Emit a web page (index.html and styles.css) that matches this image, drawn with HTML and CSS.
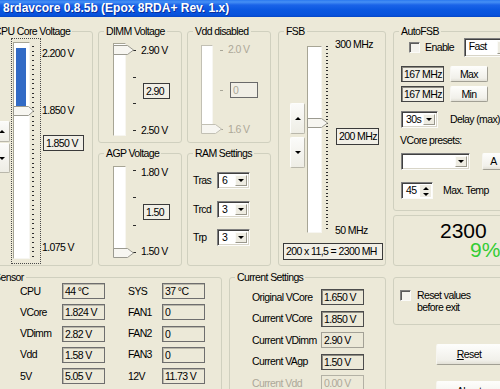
FILE: index.html
```html
<!DOCTYPE html>
<html>
<head>
<meta charset="utf-8">
<title>8rdavcore</title>
<link rel="stylesheet" href="styles.css">
</head>
<body>
<div class="titlebar">8rdavcore 0.8.5b (Epox 8RDA+ Rev. 1.x)</div>
<div class="client">
  <div class="toprow">
    <fieldset class="gb cpu">
      <legend>CPU Core Voltage</legend>
      <div class="cpu-body">
        <div class="spin cpu-spin"><div class="sb up"></div><div class="sb down"></div></div>
        <div class="focus">
          <div class="channel ch-cpu">
            <div class="sel"></div>
            <svg class="thumb th-cpu" width="21" height="10" viewBox="0 0 21 10"><polygon points="0.5,0.5 15.5,0.5 20.5,5 15.5,9.5 0.5,9.5"/></svg>
          </div>
          <div class="dots dots-cpu"></div>
        </div>
        <div class="scale cpu-scale">
          <span class="c-l1">2.200 V</span>
          <span class="c-l2">1.850 V</span>
          <span class="ed e-cpu">1.850 V</span>
          <span class="c-l3">1.075 V</span>
        </div>
      </div>
    </fieldset>

    <div class="col col2">
      <fieldset class="gb dimm">
        <legend>DIMM Voltage</legend>
        <div class="vs vs-dimm">
          <div class="channel ch-s">
            <svg class="thumb th-dimm" width="21" height="10" viewBox="0 0 21 10"><polygon points="0.5,0.5 14.5,0.5 20.5,5 14.5,9.5 0.5,9.5"/></svg>
          </div>
          <div class="ticks"><i></i><i></i><i></i><i></i></div>
          <div class="scale vscale">
            <span>2.90 V</span>
            <span class="ed e-v">2.90</span>
            <span>2.50 V</span>
          </div>
        </div>
      </fieldset>
      <fieldset class="gb agp">
        <legend>AGP Voltage</legend>
        <div class="vs vs-agp">
          <div class="channel ch-s">
            <svg class="thumb th-agp" width="21" height="10" viewBox="0 0 21 10"><polygon points="0.5,0.5 14.5,0.5 20.5,5 14.5,9.5 0.5,9.5"/></svg>
          </div>
          <div class="ticks"><i></i><i></i><i></i><i></i></div>
          <div class="scale vscale">
            <span>1.80 V</span>
            <span class="ed e-v">1.50</span>
            <span>1.50 V</span>
          </div>
        </div>
      </fieldset>
    </div>

    <div class="col col3">
      <fieldset class="gb vdd">
        <legend>Vdd disabled</legend>
        <div class="vs vs-vdd">
          <div class="channel ch-s">
            <svg class="thumb th-vdd" width="21" height="10" viewBox="0 0 21 10"><polygon points="0.5,0.5 14.5,0.5 20.5,5 14.5,9.5 0.5,9.5"/></svg>
          </div>
          <div class="ticks ticks-dis"><i></i><i></i><i></i></div>
          <div class="scale vscale dis">
            <span>2.0 V</span>
            <span class="ed e-v e-dis">0</span>
            <span>1.6 V</span>
          </div>
        </div>
      </fieldset>
      <fieldset class="gb ram">
        <legend>RAM Settings</legend>
        <div class="ramgrid">
          <span>Tras</span><div class="combo c-ram"><span class="cv">6</span><b class="dd"></b></div>
          <span>Trcd</span><div class="combo c-ram"><span class="cv">3</span><b class="dd"></b></div>
          <span>Trp</span><div class="combo c-ram"><span class="cv">3</span><b class="dd"></b></div>
        </div>
      </fieldset>
    </div>

    <fieldset class="gb fsb">
      <legend>FSB</legend>
      <div class="fsb-row">
        <div class="spin fsb-spin"><div class="sb up"></div><div class="sb down"></div></div>
        <div class="channel ch-fsb">
          <svg class="thumb th-fsb" width="21" height="10" viewBox="0 0 21 10"><polygon points="0.5,0.5 14.5,0.5 20.5,5 14.5,9.5 0.5,9.5"/></svg>
        </div>
        <div class="dots dots-fsb"></div>
        <div class="scale fsb-scale">
          <span>300 MHz</span>
          <span class="ed e-fsb">200 MHz</span>
          <span class="f-l3">50 MHz</span>
        </div>
      </div>
      <div class="ed e-res">200 x 11,5 = 2300 MH</div>
    </fieldset>

    <div class="col col5">
      <fieldset class="gb autofsb">
        <legend>AutoFSB</legend>
        <div class="af-row r1"><span class="chk"></span><span class="af-en">Enable</span><div class="combo c-fast"><span class="cv">Fast</span><b class="dd"></b></div></div>
        <div class="af-row r2"><span class="ed e-mhz">167 MHz</span><span class="btn b-mm">Max</span></div>
        <div class="af-row r3"><span class="ed e-mhz">167 MHz</span><span class="btn b-mm">Min</span></div>
        <div class="af-row r4"><div class="combo c-30"><span class="cv">30s</span><b class="dd"></b></div><span class="af-delay">Delay (max)</span></div>
        <div class="af-lbl">VCore presets:</div>
        <div class="af-row r5"><div class="combo c-pre"><span class="cv"></span><b class="dd"></b></div><span class="btn b-a">A</span></div>
        <div class="af-row r6"><div class="spinedit"><span class="cv">45</span><span class="ud"><i class="u"></i><i class="d"></i></span></div><span class="af-mt">Max. Temp</span></div>
      </fieldset>
      <div class="panel counter">
        <div class="big n1">2300</div>
        <div class="big n2">9%</div>
      </div>
    </div>
  </div>

  <div class="botrow">
    <fieldset class="gb sensor">
      <legend>Sensor</legend>
      <div class="sgrid">
        <span>CPU</span><span class="sv">44 °C</span><span>SYS</span><span class="sv">37 °C</span>
        <span>VCore</span><span class="sv">1.824 V</span><span>FAN1</span><span class="sv">0</span>
        <span>VDimm</span><span class="sv">2.82 V</span><span>FAN2</span><span class="sv">0</span>
        <span>Vdd</span><span class="sv">1.58 V</span><span>FAN3</span><span class="sv">0</span>
        <span>5V</span><span class="sv">5.05 V</span><span>12V</span><span class="sv">11.73 V</span>
      </div>
    </fieldset>
    <fieldset class="gb current">
      <legend>Current Settings</legend>
      <div class="cgrid">
        <span>Original VCore</span><span class="sv dark">1.650 V</span>
        <span>Current VCore</span><span class="sv dark">1.850 V</span>
        <span>Current VDimm</span><span class="sv light">2.90 V</span>
        <span>Current VAgp</span><span class="sv dark">1.50 V</span>
        <span class="dis">Current Vdd</span><span class="sv dis-box">0.00 V</span>
      </div>
    </fieldset>
    <div class="col col-r">
      <div class="panel resetp">
        <span class="chk"></span>
        <span class="rtxt">Reset values<br>before exit</span>
      </div>
      <span class="btn b-big b-reset"><u>R</u>eset</span>
      <span class="btn b-big b-about">About</span>
    </div>
  </div>
</div>
</body>
</html>
```

FILE: styles.css
```css
* { box-sizing: border-box; }
html, body { margin: 0; padding: 0; }
body {
  width: 500px;
  height: 389px;
  overflow: hidden;
  background: #ece9d8;
  font-family: "Liberation Sans", Arial, sans-serif;
  font-size: 10.5px;
  line-height: 13px;
  letter-spacing: -0.6px;
  color: #000;
}

.titlebar {
  height: 17px;
  padding-left: 3px;
  font: bold 12px/17px "Liberation Sans", Arial, sans-serif;
  letter-spacing: 0;
  color: #fff;
  white-space: nowrap;
  text-shadow: 1px 1px 0 #0b2f9c;
  background: linear-gradient(to bottom, #2a78ef 0px, #4690f5 2px, #1a63e8 5px, #0a57e0 10px, #0752dc 15px, #0546c6 17px);
}

.client { width: 540px; margin-left: -14px; padding-top: 8px; }

.toprow { display: flex; align-items: flex-start; height: 241px; }
.botrow { display: flex; align-items: flex-start; margin-top: 5px; }
.col { display: flex; flex-direction: column; }

.gb {
  margin: 0;
  padding: 0;
  min-width: 0;
  border: 1px solid #d0d0bf;
  border-radius: 3px;
}
.gb > legend { margin-left: 5px; padding: 0 2px; line-height: 13px; white-space: nowrap; }

.panel { border: 1px solid #d0d0bf; border-radius: 3px; }

/* columns */
.cpu { width: 107px; height: 241px; }
.col2 { width: 84px; margin-left: 5px; }
.col3 { width: 84px; margin-left: 5px; }
.dimm, .vdd { height: 118px; }
.agp, .ram { height: 119px; margin-top: 4px; }
.fsb { width: 108px; height: 241px; margin-left: 7px; }
.col5 { width: 120px; margin-left: 7px; }
.autofsb { height: 186px; }
.counter { height: 51px; margin-top: 4px; padding-top: 5px; }

/* generic parts */
.ed {
  display: block;
  height: 16px;
  border: 1px solid #3a3a3a;
  background: #f1efe6;
  padding-left: 2px;
  line-height: 14px;
  white-space: nowrap;
  overflow: hidden;
}
.channel {
  position: relative;
  background: #fff;
  border: 1px solid;
  border-color: #a7a595 #f7f6f1 #f7f6f1 #a7a595;
}
.thumb { position: absolute; left: -1px; display: block; }
.thumb polygon { fill: #f7f6f1; stroke: #9b9a90; stroke-width: 1; }
.th-vdd polygon { stroke: #c2c0b4; }

.dots { width: 2px; }
.dots-cpu {
  margin: 7px 0 0 2px;
  height: 211px;
  background: repeating-linear-gradient(to bottom, #2c2c2c 0, #2c2c2c 1px, transparent 1px, transparent 4.67px);
}
.dots-fsb {
  margin: 8px 0 0 4px;
  height: 185px;
  background: repeating-linear-gradient(to bottom, #2c2c2c 0, #2c2c2c 1px, transparent 1px, transparent 3.5px);
}

.spin { display: flex; flex-direction: column; }
.sb {
  display: flex;
  align-items: center;
  justify-content: center;
  background: linear-gradient(to bottom, #fbfbf9, #eeede5);
  border: 1px solid;
  border-color: #fdfdfb #b9b7ab #b9b7ab #fdfdfb;
  border-radius: 2px;
}
.sb.up::after { content: ""; border-left: 3px solid transparent; border-right: 3px solid transparent; border-bottom: 3px solid #000; }
.sb.down::after { content: ""; border-left: 3px solid transparent; border-right: 3px solid transparent; border-top: 3px solid #000; }

/* CPU */
.cpu-body { display: flex; align-items: flex-start; }
.cpu-spin { width: 17px; margin: 83px 0 0 6px; }
.cpu-spin .up { height: 21px; }
.cpu-spin .down { height: 30px; margin-top: 1px; }
.focus {
  display: flex;
  align-items: flex-start;
  width: 30px;
  height: 226px;
  margin-left: 1px;
  border: 1px dotted #4a4a4a;
}
.ch-cpu { width: 17px; height: 217px; margin: 3px 0 0 1px; }
.sel { position: absolute; left: 2px; top: 5px; width: 10px; height: 59px; background: #316ac5; }
.th-cpu { top: 63px; }
.scale { display: flex; flex-direction: column; white-space: nowrap; }
.cpu-scale { margin-left: 1px; }
.c-l1 { margin-top: 9px; }
.c-l2 { margin-top: 44px; }
.e-cpu { margin: 18px 0 0 1px; width: 41px; }
.c-l3 { margin-top: 90px; }

/* small sliders */
.vs { display: flex; align-items: flex-start; }
.ch-s { width: 13px; }
.ticks { display: flex; flex-direction: column; justify-content: space-between; width: 3px; margin-left: 7px; }
.ticks i { display: block; width: 3px; height: 1px; background: #2c2c2c; }
.ticks-dis i { background: #a8a698; }
.vscale { justify-content: space-between; margin-left: 5px; }
.e-v { margin-left: 2px; width: 27px; }
.dis { color: #aca899; }
.e-dis { border-color: #6a6a6a; width: 28px; }

.vs-dimm { margin-left: 14px; }
.vs-dimm .ch-s { margin-top: 5px; height: 93px; }
.vs-dimm .ticks { margin-top: 12px; height: 81px; }
.vs-dimm .vscale { margin-top: 6px; height: 93px; }
.th-dimm { top: 1px; }

.vs-agp { margin-left: 14px; }
.vs-agp .ch-s { margin-top: 6px; height: 91px; }
.vs-agp .ticks { margin-top: 10px; height: 83px; }
.vs-agp .vscale { margin-top: 6px; height: 92px; }
.th-agp { top: 81px; }

.vs-vdd { margin-left: 13px; }
.vs-vdd .ch-s { width: 12px; margin-top: 7px; height: 88px; border-color: #c2c0b4 #f7f6f1 #f7f6f1 #c2c0b4; }
.vs-vdd .ticks { margin-top: 12px; height: 80px; }
.vs-vdd .vscale { margin-top: 5px; height: 93px; }
.th-vdd { top: 78px; }

/* RAM */
.ramgrid {
  display: grid;
  grid-template-columns: 24px 33px;
  grid-auto-rows: 17px;
  row-gap: 11.5px;
  align-items: center;
  margin: 12px 0 0 5px;
}
.combo {
  display: flex;
  align-items: stretch;
  height: 17px;
  background: #fff;
  border: 1px solid;
  border-color: #7f7f7f #fbfbf8 #fbfbf8 #7f7f7f;
  box-shadow: inset 1px 1px 0 #404040, inset -1px -1px 0 #d8d5c8;
  padding: 2px;
}
.cv { flex: 1; padding-left: 2px; line-height: 11px; white-space: nowrap; overflow: hidden; }
.dd {
  display: flex;
  align-items: center;
  justify-content: center;
  width: 12px;
  background: #eeece2;
  border: 1px solid;
  border-color: #fbfbf8 #9a988c #9a988c #fbfbf8;
}
.dd::after { content: ""; border-left: 3px solid transparent; border-right: 3px solid transparent; border-top: 3px solid #000; }

/* FSB */
.fsb-row { display: flex; align-items: flex-start; height: 205px; }
.fsb-spin { width: 15px; margin: 65px 0 0 11px; }
.fsb-spin .up { height: 31px; }
.fsb-spin .down { height: 31px; margin-top: 3px; }
.ch-fsb { width: 15px; height: 187px; margin: 8px 0 0 2px; }
.th-fsb { top: 71px; }
.fsb-scale { margin-left: 7px; }
.e-fsb { margin: 77px 0 0 1px; width: 43px; height: 17px; line-height: 15px; }
.f-l3 { margin-top: 79px; }
.e-res { margin-left: 4px; width: 100px; height: 17px; line-height: 15px; }

/* AutoFSB */
.af-row { display: flex; align-items: center; }
.r1 { height: 19px; }
.chk {
  display: block;
  flex: none;
  width: 11px;
  height: 11px;
  background: #f4f3ee;
  border: 1px solid;
  border-color: #7f7f7f #fbfbf8 #fbfbf8 #7f7f7f;
  box-shadow: inset 1px 1px 0 #5a5a5a;
}
.r1 .chk { margin-left: 15px; }
.af-en { margin-left: 5px; width: 42px; }
.c-fast { width: 52px; height: 19px; }
.r2 { margin-top: 9px; }
.r3 { margin-top: 4px; }
.e-mhz {
  margin-left: 7px;
  width: 43px;
  border-color: #454545;
  box-shadow: inset 1px 1px 0 #8c8a80;
}
.btn {
  display: flex;
  align-items: center;
  justify-content: center;
  background: linear-gradient(to bottom, #fdfdfb, #f1f0ea 80%, #e2e0d6);
  border: 1px solid;
  border-color: #fdfdfb #a19f94 #a19f94 #f6f5f0;
  border-radius: 2px;
  white-space: nowrap;
}
.b-mm { margin-left: 6px; width: 38px; height: 16px; }
.r4 { margin-top: 9px; }
.c-30 { margin-left: 7px; width: 37px; }
.af-delay { margin-left: 12px; white-space: nowrap; }
.af-lbl { margin: 6px 0 0 6px; white-space: nowrap; }
.r5 { margin-top: 6px; }
.c-pre { margin-left: 7px; width: 70px; }
.b-a { margin-left: 12px; width: 30px; height: 17px; justify-content: flex-start; padding-left: 7px; }
.r6 { margin-top: 12px; }
.spinedit {
  display: flex;
  margin-left: 7px;
  width: 32px;
  height: 17px;
  background: #fff;
  border: 1px solid;
  border-color: #7f7f7f #fbfbf8 #fbfbf8 #7f7f7f;
  box-shadow: inset 1px 1px 0 #404040;
  padding: 2px 1px 1px 2px;
}
.ud { display: flex; flex-direction: column; width: 11px; }
.ud i {
  flex: 1;
  display: flex;
  align-items: center;
  justify-content: center;
  background: #eeece2;
}
.ud .u::after { content: ""; border-left: 3px solid transparent; border-right: 3px solid transparent; border-bottom: 3px solid #000; }
.ud .d::after { content: ""; border-left: 3px solid transparent; border-right: 3px solid transparent; border-top: 3px solid #000; }
.af-mt { margin-left: 10px; white-space: nowrap; }

.big { font-size: 21px; line-height: 19px; letter-spacing: 0; }
.n1 { margin-left: 46px; }
.n2 { margin-left: 76px; color: #34cc34; }

/* bottom */
.sensor { width: 236px; height: 140px; }
.current { width: 157px; height: 140px; margin-left: 7px; }
.col-r { width: 120px; margin-left: 7px; margin-top: 6px; }

.sgrid {
  display: grid;
  grid-template-columns: 42px 66px 34px 43px;
  grid-auto-rows: 16px;
  row-gap: 5.25px;
  align-items: center;
  margin: -1px 0 0 33px;
}
.sgrid .sv { width: 43px; }
.cgrid {
  display: grid;
  grid-template-columns: 69px 43px;
  grid-auto-rows: 16px;
  row-gap: 5.5px;
  align-items: center;
  margin: 5px 0 0 22px;
  white-space: nowrap;
}
.sv {
  height: 16px;
  border: 1px solid #6e6e6e;
  box-shadow: inset 1px 1px 0 #b9b7aa;
  padding-left: 2px;
  line-height: 14px;
  white-space: nowrap;
  overflow: hidden;
}
.sv.dark { border-color: #4c4c4c; box-shadow: inset 1px 1px 0 #8e8c82; }
.sv.light { border-color: #a3a196; box-shadow: none; }
.sv.dis-box { border-color: #b3b1a5; box-shadow: none; color: #aca899; }

.resetp { display: flex; align-items: flex-start; height: 48px; padding: 12px 0 0 6px; }
.rtxt { margin-left: 6px; margin-top: -1px; line-height: 12px; }
.b-big { width: 66px; height: 21px; margin-left: 43px; }
.b-reset { margin-top: 19px; }
.b-about { margin-top: 16px; }
```
